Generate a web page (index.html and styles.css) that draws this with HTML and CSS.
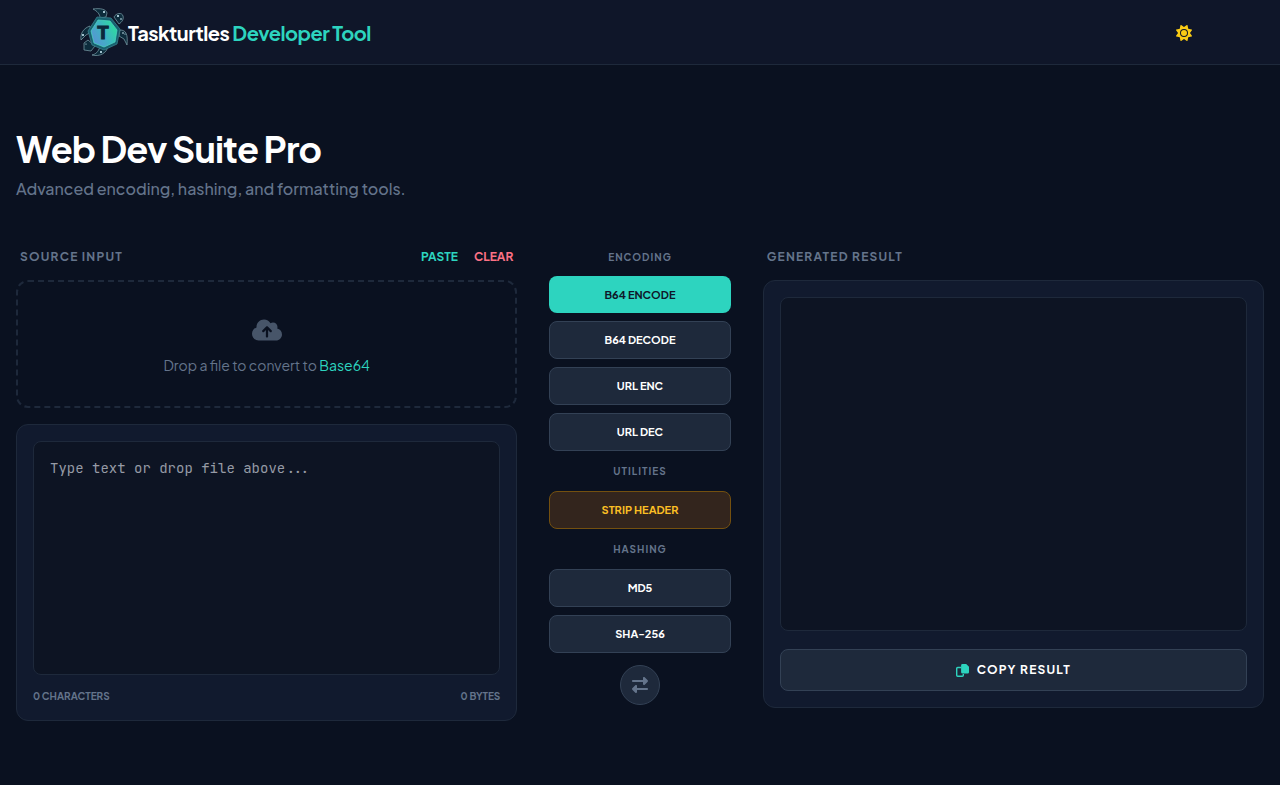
FILE: index.html
```html
<!DOCTYPE html>
<html lang="en">
<head>
<meta charset="UTF-8">
<meta name="viewport" content="width=device-width, initial-scale=1.0">
<title>Taskturtles Developer Tool</title>
<link rel="stylesheet" href="styles.css">
</head>
<body>
<nav class="navbar">
    <a href="#" class="brand">
        <svg class="logo" viewBox="0 0 48 48" aria-hidden="true">
            <defs>
                <linearGradient id="shell" x1="0" y1="0.8" x2="1" y2="0.2">
                    <stop offset="0" stop-color="#5b8fd6"/>
                    <stop offset="0.5" stop-color="#3fb3c4"/>
                    <stop offset="1" stop-color="#2be09a"/>
                </linearGradient>
            </defs>
            <!-- flippers, head and tail -->
            <g fill="#0d2c3c" stroke="#7fa3ad" stroke-width="0.7" stroke-linejoin="round">
                <path d="M13 1c7-1 13 0 14 4l-1 4-6 1c0-4-3-7-7-9z"/>
                <path d="M10 18c-6 2-10 7-9 14l5-5 5-3z"/>
                <path d="M40 22c6 0 8 4 7 15l-3-6-5-3z"/>
                <path d="M8 32l-4 3 0 7 7 1 4-5z"/>
                <path d="M28 38c-1 7-8 11-16 9 4-1 6-3 8-8z"/>
                <path d="M34 9c2-4 8-5 9-1 1 3-1 6-4 8z"/>
            </g>
            <g fill="#d5f3ff">
                <circle cx="24" cy="4" r="1"/>
                <circle cx="3" cy="27" r="1"/>
                <circle cx="38" cy="8" r="1"/>
                <circle cx="41" cy="11" r="0.8"/>
                <circle cx="43" cy="25" r="0.8"/>
                <circle cx="45" cy="26" r="0.6"/>
                <circle cx="21" cy="44" r="1"/>
                <circle cx="6" cy="36" r="0.6"/>
            </g>
            <path d="M17 9l14 1 9 11-3 15-13 6-12-5-4-14z" fill="#17606f" stroke="#397f8b" stroke-width="0.8" stroke-linejoin="round"/>
            <path d="M18 12l12 1 7 9-2 12-11 5-10-4-3-12z" fill="url(#shell)" stroke="#49d2bf" stroke-width="0.8" stroke-linejoin="round"/>
            <text x="23" y="31" text-anchor="middle" class="logo-letter">T</text>
        </svg>
        <span class="brand-name">Taskturtles <span class="accent">Developer Tool</span></span>
    </a>
    <button type="button" class="theme-btn" aria-label="Toggle theme">
        <svg viewBox="0 0 512 512" width="16" height="16" fill="currentColor"><path d="M361.5 1.2c5 2.1 8.6 6.6 9.6 11.9L391 121l107.9 19.8c5.3 1 9.8 4.6 11.9 9.6s1.5 10.7-1.6 15.2L446.9 256l62.3 90.3c3.1 4.5 3.7 10.2 1.6 15.2s-6.6 8.6-11.9 9.6L391 391 371.1 498.9c-1 5.3-4.6 9.8-9.6 11.9s-10.7 1.5-15.2-1.6L256 446.9l-90.3 62.3c-4.5 3.1-10.2 3.7-15.2 1.6s-8.6-6.6-9.6-11.9L121 391 13.1 371.1c-5.3-1-9.8-4.6-11.9-9.6s-1.5-10.7 1.6-15.2L65.1 256 2.8 165.7c-3.1-4.5-3.7-10.2-1.6-15.2s6.6-8.6 11.9-9.6L121 121 140.9 13.1c1-5.3 4.6-9.8 9.6-11.9s10.7-1.5 15.2 1.6L256 65.1 346.3 2.8c4.5-3.1 10.2-3.7 15.2-1.6zM160 256a96 96 0 1 1 192 0 96 96 0 1 1 -192 0zm224 0a128 128 0 1 0 -256 0 128 128 0 1 0 256 0z"/></svg>
    </button>
</nav>

<main class="container">
    <header class="page-header">
        <h1>Web Dev Suite Pro</h1>
        <p>Advanced encoding, hashing, and formatting tools.</p>
    </header>

    <div class="workspace">
        <section class="panel">
            <div class="panel-head">
                <label for="inputText">SOURCE INPUT</label>
                <div class="panel-actions">
                    <button type="button" class="link-btn paste">PASTE</button>
                    <button type="button" class="link-btn clear">CLEAR</button>
                </div>
            </div>
            <div class="drop-zone">
                <svg viewBox="0 0 640 512" width="30" height="24" fill="currentColor" aria-hidden="true"><path d="M144 480C64.500 480 0 415.500 0 336c0-62.800 40.200-116.200 96.200-135.900c-.1-2.700-.2-5.400-.2-8.100c0-88.400 71.600-160 160-160c59.300 0 111 32.200 138.700 80.200C409.900 102 428.300 96 448 96c53 0 96 43 96 96c0 12.200-2.300 23.800-6.400 34.600C596 238.400 640 290.100 640 352c0 70.700-57.300 128-128 128H144zm79-217c-9.400 9.400-9.400 24.600 0 33.900s24.600 9.400 33.900 0l39-39V392c0 13.300 10.700 24 24 24s24-10.700 24-24V257.900l39 39c9.400 9.400 24.600 9.400 33.900 0s9.400-24.600 0-33.900l-80-80c-9.400-9.400-24.600-9.400-33.900 0l-80 80z"/></svg>
                <p>Drop a file to convert to <span class="accent">Base64</span></p>
            </div>
            <div class="card">
                <textarea id="inputText" class="input-box" placeholder="Type text or drop file above..."></textarea>
                <div class="counts">
                    <span id="charCount">0 CHARACTERS</span>
                    <span id="byteCount">0 BYTES</span>
                </div>
            </div>
        </section>

        <section class="tools">
            <h2>ENCODING</h2>
            <button type="button" class="tool-btn primary">B64 ENCODE</button>
            <button type="button" class="tool-btn">B64 DECODE</button>
            <button type="button" class="tool-btn">URL ENC</button>
            <button type="button" class="tool-btn">URL DEC</button>
            <h2>UTILITIES</h2>
            <button type="button" class="tool-btn warning">STRIP HEADER</button>
            <h2>HASHING</h2>
            <button type="button" class="tool-btn">MD5</button>
            <button type="button" class="tool-btn">SHA-256</button>
            <button type="button" class="swap-btn" aria-label="Swap input and result">
                <svg viewBox="0 0 512 512" width="16" height="16" fill="currentColor"><path d="M32 96l320 0V32c0-12.900 7.800-24.600 19.800-29.600s25.700-2.200 34.900 6.900l96 96c6 6 9.400 14.100 9.400 22.600s-3.400 16.600-9.400 22.600l-96 96c-9.200 9.200-22.900 11.900-34.900 6.900s-19.800-16.600-19.800-29.600V160L32 160c-17.700 0-32-14.300-32-32s14.300-32 32-32zM480 352c17.700 0 32 14.300 32 32s-14.300 32-32 32H160v64c0 12.900-7.800 24.600-19.800 29.600s-25.700 2.200-34.900-6.900l-96-96c-6-6-9.400-14.100-9.400-22.600s3.400-16.600 9.400-22.600l96-96c9.200-9.200 22.900-11.900 34.900-6.900s19.800 16.600 19.800 29.600l0 64H480z"/></svg>
            </button>
        </section>

        <section class="panel">
            <div class="panel-head">
                <label for="outputText">GENERATED RESULT</label>
            </div>
            <div class="card">
                <textarea id="outputText" class="output-box" readonly></textarea>
                <button type="button" class="copy-btn">
                    <svg viewBox="0 0 13 13" width="13" height="13" aria-hidden="true">
                        <path d="M5 3.500H1.700a1 1 0 0 0-1 1v6.800a1 1 0 0 0 1 1h4.600a1 1 0 0 0 1-1V10" fill="none" stroke="currentColor" stroke-width="1.400"/>
                        <path d="M6.500 0h3.700L13 2.800v5.400A1.400 1.400 0 0 1 11.600 9.600H6.500A1.400 1.400 0 0 1 5.100 8.200V1.400A1.400 1.400 0 0 1 6.500 0z" fill="currentColor"/>
                    </svg>
                    COPY RESULT
                </button>
            </div>
        </section>
    </div>
</main>
</body>
</html>
```
FILE: styles.css
```css
* {
    box-sizing: border-box;
}

body {
    margin: 0;
    min-height: 100vh;
    background-color: #0a1120;
    color: #f8fafc;
    font-family: "Plus Jakarta Sans", Inter, sans-serif;
}

h1,
h2,
p {
    margin: 0;
}

button {
    font-family: inherit;
    cursor: pointer;
}

svg {
    display: block;
}

.accent {
    color: #2dd4bf;
}

/* Navbar */
.navbar {
    display: flex;
    align-items: center;
    justify-content: space-between;
    height: 65px;
    padding: 0 80px;
    background-color: #0f1629;
    border-bottom: 1px solid #1e293b;
}

.brand {
    display: flex;
    align-items: center;
    color: #fff;
    text-decoration: none;
}

.logo {
    width: 48px;
    height: 48px;
}

.logo-letter {
    font-family: "Liberation Mono", monospace;
    font-size: 20px;
    font-weight: bold;
    fill: #0b2a3b;
    stroke: #0b2a3b;
    stroke-width: 1px;
}

.brand-name {
    padding-top: 2px;
    font-size: 20px;
    line-height: 28px;
    font-weight: 700;
    letter-spacing: -0.025em;
}

.theme-btn {
    padding: 10px 8px 8px;
    background: none;
    border: none;
    color: #facc15;
}

/* Page */
.container {
    padding: 64px 16px;
}

.page-header {
    margin-bottom: 48px;
}

.page-header h1 {
    font-size: 36px;
    line-height: 40px;
    font-weight: 700;
    letter-spacing: -0.025em;
    color: #fff;
}

.page-header p {
    margin-top: 8px;
    font-size: 16px;
    line-height: 24px;
    font-weight: 500;
    color: #64748b;
}

.workspace {
    display: grid;
    grid-template-columns: repeat(12, minmax(0, 1fr));
    column-gap: 32px;
    align-items: start;
}

.panel {
    grid-column: span 5;
}

.panel-head {
    display: flex;
    align-items: center;
    justify-content: space-between;
    margin-bottom: 15px;
    padding: 0 4px;
    font-size: 12px;
    line-height: 16px;
}

.panel-head label {
    font-weight: 700;
    letter-spacing: 0.1em;
    color: #64748b;
}

.panel-actions {
    display: flex;
    gap: 16px;
}

.link-btn {
    padding: 0;
    background: none;
    border: none;
    font-size: 12px;
    line-height: 16px;
    font-weight: 700;
}

.paste {
    color: #2dd4bf;
}

.clear {
    color: #fb7185;
}

.drop-zone {
    display: flex;
    flex-direction: column;
    align-items: center;
    gap: 12px;
    margin-bottom: 16px;
    padding: 36px 32px 30px;
    border: 2px dashed #1e293b;
    border-radius: 12px;
    color: #475569;
}

.drop-zone p {
    font-size: 14px;
    line-height: 22px;
    color: #64748b;
}

.card {
    padding: 16px;
    background-color: #111a2e;
    border: 1px solid #1e293b;
    border-radius: 12px;
}

textarea {
    display: block;
    width: 100%;
    padding: 16px;
    background-color: #0d1423;
    border: 1px solid #1e293b;
    border-radius: 8px;
    color: #cbd5e1;
    font-family: "JetBrains Mono", "DejaVu Sans Mono", monospace;
    font-size: 14px;
    line-height: 20px;
    resize: none;
}

textarea::placeholder {
    color: #969ba6;
}

.input-box {
    height: 234px;
}

.output-box {
    height: 334px;
}

.counts {
    display: flex;
    justify-content: space-between;
    padding-top: 13px;
    font-size: 10px;
    line-height: 16px;
    font-weight: 700;
    color: #64748b;
}

.copy-btn {
    display: flex;
    align-items: center;
    justify-content: center;
    gap: 8px;
    width: 100%;
    margin-top: 18px;
    padding: 12px;
    background-color: #1e293b;
    border: 1px solid #334155;
    border-radius: 8px;
    color: #fff;
    font-size: 12px;
    line-height: 16px;
    font-weight: 700;
    letter-spacing: 0.1em;
}

.copy-btn svg {
    color: #2dd4bf;
}

/* Middle column */
.tools {
    grid-column: span 2;
    display: flex;
    flex-direction: column;
    gap: 8px;
}

.tools h2 {
    margin: 4px 0;
    font-size: 10px;
    line-height: 16px;
    font-weight: 700;
    letter-spacing: 0.1em;
    text-align: center;
    color: #64748b;
}

.tools h2:first-child {
    margin: 0 0 3px;
}

.tool-btn {
    min-height: 37px;
    padding: 10px;
    background-color: #1e293b;
    border: 1px solid #334155;
    border-radius: 8px;
    color: #fff;
    font-size: 11px;
    line-height: 16px;
    font-weight: 700;
}

.tool-btn.primary {
    background-color: #2dd4bf;
    border: none;
    color: #0f172a;
}

.tool-btn.warning {
    background-color: #33251d;
    border-color: #74500f;
    color: #fbbf24;
}

.swap-btn {
    display: flex;
    align-items: center;
    justify-content: center;
    align-self: center;
    width: 40px;
    height: 40px;
    margin-top: 4px;
    padding: 0;
    background-color: #1e293b;
    border: 1px solid #334155;
    border-radius: 50%;
    color: #64748b;
}
```
